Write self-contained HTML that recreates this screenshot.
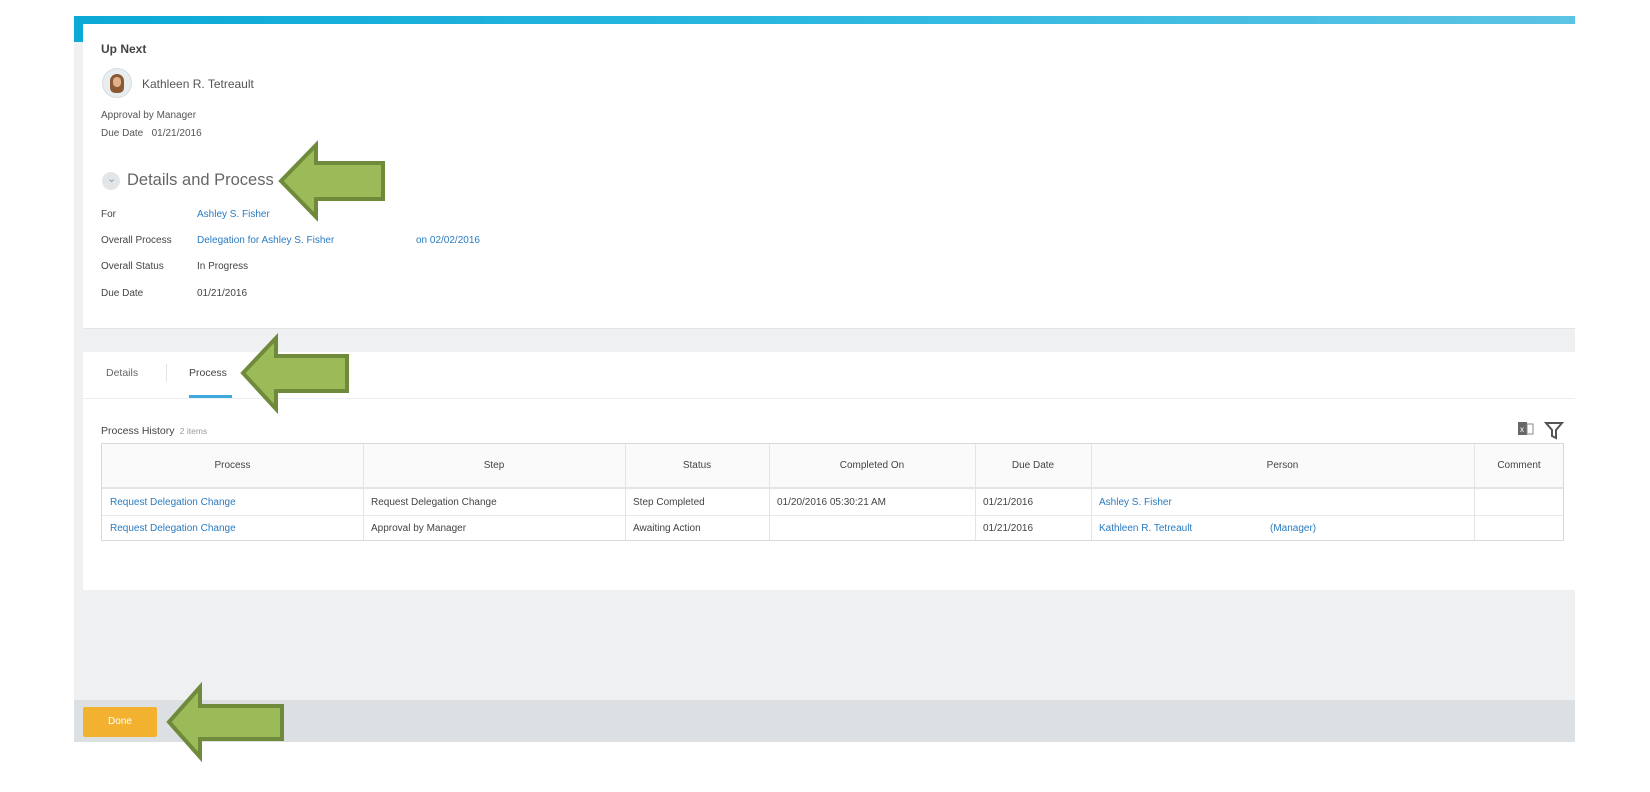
<!DOCTYPE html>
<html><head><meta charset="utf-8"><style>
*{margin:0;padding:0;box-sizing:border-box}
body{width:1650px;height:792px;background:#fff;font-family:"Liberation Sans",sans-serif;color:#444;position:relative;overflow:hidden;font-size:10.5px}
.a{position:absolute;white-space:nowrap}
.l{color:#2a7bc0}
.t{position:absolute;top:0;transform:translateY(-50%)}
</style></head><body>
<div class="a" style="left:74px;top:23px;width:1501px;height:677px;background:#eef0f2"></div>
<div class="a" style="left:74px;top:700px;width:1501px;height:42px;background:#dde0e3"></div>
<div class="a" style="left:74px;top:16px;width:1501px;height:8px;background:linear-gradient(90deg,#0aa9d6,#2cb8e0 50%,#5cc3e4)"></div>
<div class="a" style="left:74px;top:16px;width:9px;height:26px;background:#0aa9d6"></div>
<div class="a" style="left:83px;top:24px;width:1492px;height:305px;background:#fff;border-bottom:1px solid #e2e4e6"></div>
<div class="a" style="left:83px;top:352px;width:1492px;height:238px;background:#fff"></div>

<div class="a" style="left:101px;top:42px;font-size:12px;font-weight:bold;color:#444">Up Next</div>
<div class="a" style="left:102px;top:68px;width:30px;height:30px;border-radius:50%;background:#e8eef0;border:1px solid #d8dde0"></div>
<div class="a" style="left:110px;top:74px;width:14px;height:19px;border-radius:7px 7px 5px 5px;background:#8a5a35"></div>
<div class="a" style="left:113px;top:77px;width:8px;height:10px;border-radius:4px;background:#e0b08a"></div>
<div class="a" style="left:142px;top:77px;font-size:12px;color:#555">Kathleen R. Tetreault</div>
<div class="a" style="left:101px;top:110px;font-size:10px;color:#555">Approval by Manager</div>
<div class="a" style="left:101px;top:128px;font-size:10px;color:#555">Due Date &nbsp;&nbsp;01/21/2016</div>

<div class="a" style="left:102px;top:172px;width:18px;height:18px;border-radius:50%;background:#e3e6e8"></div>
<div class="a" style="left:107px;top:172px;font-size:11px;color:#999">⌄</div>
<div class="a" style="left:127px;top:171px;font-size:16.5px;color:#666">Details and Process</div>

<div class="a" style="left:101px;top:209px;font-size:10px">For</div>
<div class="a l" style="left:197px;top:209px;font-size:10px">Ashley S. Fisher</div>
<div class="a" style="left:101px;top:235px;font-size:10px">Overall Process</div>
<div class="a l" style="left:197px;top:235px;font-size:10px">Delegation for Ashley S. Fisher</div>
<div class="a l" style="left:416px;top:235px;font-size:10px">on 02/02/2016</div>
<div class="a" style="left:101px;top:261px;font-size:10px">Overall Status</div>
<div class="a" style="left:197px;top:261px;font-size:10px">In Progress</div>
<div class="a" style="left:101px;top:288px;font-size:10px">Due Date</div>
<div class="a" style="left:197px;top:288px;font-size:10px">01/21/2016</div>

<div class="a" style="left:106px;top:367px;font-size:10.5px;color:#666">Details</div>
<div class="a" style="left:166px;top:364px;width:1px;height:18px;background:#e2e4e6"></div>
<div class="a" style="left:189px;top:367px;font-size:10.5px;color:#444">Process</div>
<div class="a" style="left:189px;top:395px;width:43px;height:3px;background:#3fa9dd"></div>
<div class="a" style="left:83px;top:398px;width:1492px;height:1px;background:#eceef0"></div>

<div class="a" style="left:101px;top:425px;font-size:10.5px;color:#444">Process History <span style="font-size:8.5px;color:#999">&nbsp;2 items</span></div>
<svg class="a" style="left:1517px;top:420px" width="50" height="20"><rect x="1" y="2" width="9" height="13" fill="#666"/><rect x="10" y="4" width="6" height="10" fill="none" stroke="#888"/><text x="3" y="12" font-size="8" fill="#fff" font-family="Liberation Sans">x</text><path d="M29 3h16l-6 7v8l-4-2v-6z" fill="none" stroke="#555" stroke-width="2"/></svg>

<div class="a" style="left:101px;top:443px;width:1463px;height:98px;border:1px solid #d6d9dc"></div>
<div class="a" style="left:102px;top:444px;width:1461px;height:45px;background:#fafafa;border-bottom:2px solid #e2e4e6"></div>
<div class="a" style="left:102px;top:515px;width:1461px;height:1px;background:#e6e8ea"></div>
<div class="a" style="left:363px;top:444px;width:1px;height:96px;background:#e2e4e6"></div>
<div class="a" style="left:625px;top:444px;width:1px;height:96px;background:#e2e4e6"></div>
<div class="a" style="left:769px;top:444px;width:1px;height:96px;background:#e2e4e6"></div>
<div class="a" style="left:975px;top:444px;width:1px;height:96px;background:#e2e4e6"></div>
<div class="a" style="left:1091px;top:444px;width:1px;height:96px;background:#e2e4e6"></div>
<div class="a" style="left:1474px;top:444px;width:1px;height:96px;background:#e2e4e6"></div>
<div class="a" style="left:102px;top:460px;width:261px;text-align:center;font-size:10px">Process</div>
<div class="a" style="left:363px;top:460px;width:262px;text-align:center;font-size:10px">Step</div>
<div class="a" style="left:625px;top:460px;width:144px;text-align:center;font-size:10px">Status</div>
<div class="a" style="left:769px;top:460px;width:206px;text-align:center;font-size:10px">Completed On</div>
<div class="a" style="left:975px;top:460px;width:116px;text-align:center;font-size:10px">Due Date</div>
<div class="a" style="left:1091px;top:460px;width:383px;text-align:center;font-size:10px">Person</div>
<div class="a" style="left:1474px;top:460px;width:90px;text-align:center;font-size:10px">Comment</div>

<div class="a l" style="left:110px;top:497px;font-size:10px">Request Delegation Change</div>
<div class="a" style="left:371px;top:497px;font-size:10px">Request Delegation Change</div>
<div class="a" style="left:633px;top:497px;font-size:10px">Step Completed</div>
<div class="a" style="left:777px;top:497px;font-size:10px">01/20/2016 05:30:21 AM</div>
<div class="a" style="left:983px;top:497px;font-size:10px">01/21/2016</div>
<div class="a l" style="left:1099px;top:497px;font-size:10px">Ashley S. Fisher</div>
<div class="a l" style="left:110px;top:523px;font-size:10px">Request Delegation Change</div>
<div class="a" style="left:371px;top:523px;font-size:10px">Approval by Manager</div>
<div class="a" style="left:633px;top:523px;font-size:10px">Awaiting Action</div>
<div class="a" style="left:983px;top:523px;font-size:10px">01/21/2016</div>
<div class="a l" style="left:1099px;top:523px;font-size:10px">Kathleen R. Tetreault</div>
<div class="a l" style="left:1270px;top:523px;font-size:10px">(Manager)</div>

<div class="a" style="left:83px;top:707px;width:74px;height:30px;background:#f2b230;border-radius:2px;color:#fff;font-size:10px;text-align:center;line-height:30px">Done</div>

<svg class="a" style="left:0;top:0" width="1650" height="792">
<g fill="#9bbb59" stroke="#6f8a3a" stroke-width="4" stroke-linejoin="miter">
<path d="M281 181 L316 145 L316 163 L383 163 L383 199 L316 199 L316 217 Z"/>
<path d="M243 373 L276 338 L276 356 L347 356 L347 391 L276 391 L276 409 Z"/>
<path d="M169 722 L200 687 L200 706 L282 706 L282 739 L200 739 L200 757 Z"/>
</g></svg>
</body></html>
